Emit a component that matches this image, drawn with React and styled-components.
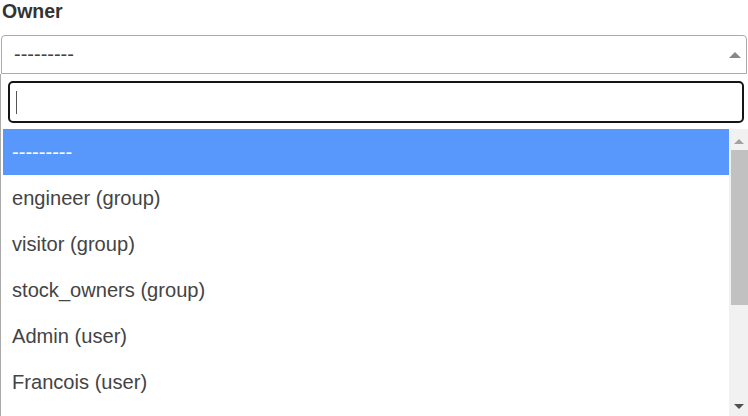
import React from "react";
import styled, { createGlobalStyle } from "styled-components";

const Global = createGlobalStyle`
  html, body { margin: 0; padding: 0; background: #fff; overflow: hidden; }
  body { font-family: "Liberation Sans", Arial, Helvetica, sans-serif; }
  * { box-sizing: border-box; }
`;

const Page = styled.div`
  width: 748px;
  height: 416px;
  overflow: hidden;
`;

const Label = styled.div`
  font-size: 19.5px;
  line-height: 22px;
  font-weight: bold;
  color: #333;
  padding-left: 2px;
  margin-bottom: 13px;
`;

const Selection = styled.div`
  margin-left: 1px;
  width: 746px;
  height: 39px;
  border: 1px solid #aaa;
  border-radius: 4px 4px 0 0;
  display: flex;
  align-items: center;
  justify-content: space-between;
  padding: 0 5px 0 12px;
  font-size: 20px;
  color: #444;
`;

const Dropdown = styled.div`
  width: 750px;
  border: 1px solid #aaa;
  border-top: none;
  background: #fff;
`;

const SearchWrap = styled.div`
  padding: 7px 5px 6px 7px;
`;

const SearchField = styled.div`
  height: 42px;
  border: 2px solid #151515;
  border-radius: 5px;
  padding-left: 6px;
  display: flex;
  align-items: center;
`;

const Caret = styled.span`
  display: block;
  width: 1px;
  height: 23px;
  background: #555;
`;

const Results = styled.div`
  display: flex;
  height: 288px;
  padding-left: 2px;
`;

const List = styled.ul`
  flex: 1;
  margin: 0;
  padding: 0;
  list-style: none;
  overflow: hidden;
`;

const Option = styled.li`
  height: 46px;
  display: flex;
  align-items: center;
  padding: 0 9px;
  font-size: 20.1px;
  line-height: 24px;
  color: ${(p) => (p.$active ? "#fff" : "#444")};
  background: ${(p) => (p.$active ? "#5897fb" : "transparent")};
`;

const Scrollbar = styled.div`
  width: 20px;
  background: #f1f1f1;
  display: flex;
  flex-direction: column;
`;

const ScrollButton = styled.div`
  height: ${(p) => p.$h}px;
  display: flex;
  justify-content: center;
  align-items: flex-start;
  padding-top: ${(p) => p.$pt}px;
`;

const Thumb = styled.div`
  margin: 0 1px 0 2px;
  height: 155px;
  background: #c1c1c1;
`;

const Track = styled.div`
  flex: 1;
`;

const options = [
  "---------",
  "engineer (group)",
  "visitor (group)",
  "stock_owners (group)",
  "Admin (user)",
  "Francois (user)",
];

export default function App() {
  return (
    <Page>
      <Global />
      <Label>Owner</Label>
      <Selection>
        <span>---------</span>
        <svg width="12" height="6" viewBox="0 0 12 6">
          <path d="M0 6 L6 0 L12 6 Z" fill="#888" />
        </svg>
      </Selection>
      <Dropdown>
        <SearchWrap>
          <SearchField>
            <Caret />
          </SearchField>
        </SearchWrap>
        <Results>
          <List>
            {options.map((o, i) => (
              <Option key={o} $active={i === 0}>
                {o}
              </Option>
            ))}
          </List>
          <Scrollbar>
            <ScrollButton $h={21} $pt={10}>
              <svg width="10" height="5" viewBox="0 0 10 5">
                <path d="M0 5 L5 0 L10 5 Z" fill="#a3a3a3" />
              </svg>
            </ScrollButton>
            <Thumb />
            <Track />
            <ScrollButton $h={21} $pt={8}>
              <svg width="10" height="5" viewBox="0 0 10 5">
                <path d="M0 0 L10 0 L5 5 Z" fill="#505050" />
              </svg>
            </ScrollButton>
          </Scrollbar>
        </Results>
      </Dropdown>
    </Page>
  );
}
